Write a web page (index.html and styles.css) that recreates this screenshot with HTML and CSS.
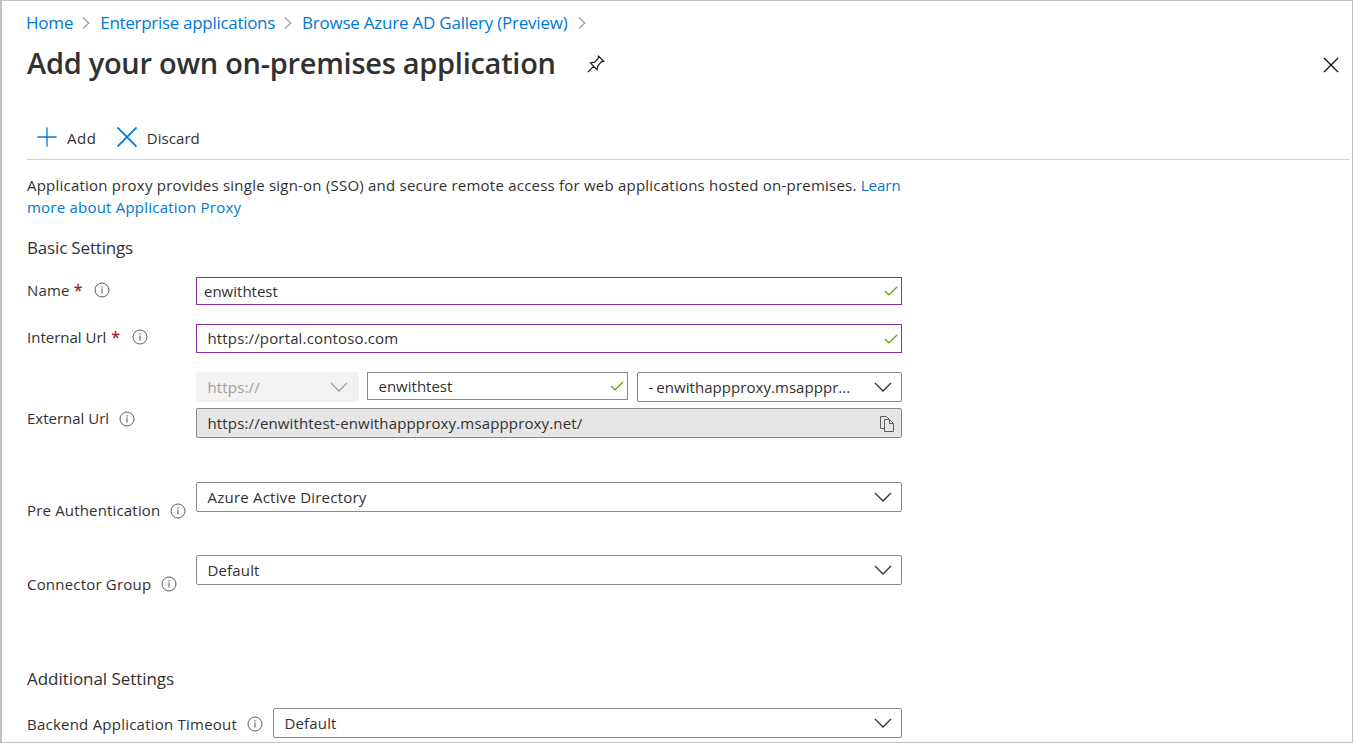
FILE: index.html
```
<!DOCTYPE html>
<html lang="en">
<head>
<meta charset="utf-8">
<title>Add your own on-premises application</title>
<link rel="stylesheet" href="styles.css">
</head>
<body>
<svg class="defs" width="0" height="0">
  <symbol id="info" viewBox="0 0 16 16"><circle cx="8" cy="8" r="7" fill="none" stroke="#605e5c"/><path d="M8 6.6v5" stroke="#605e5c" stroke-width="1.1"/><path d="M8 4.2v1.2" stroke="#605e5c" stroke-width="1.2"/></symbol>
  <symbol id="crumb" viewBox="0 0 8 12"><path d="M.8.5 6.8 6 .8 11.5" fill="none" stroke="#a6a6a6" stroke-width="1.4"/></symbol>
  <symbol id="chev" viewBox="0 0 18 10"><path d="M1 1 9 9l8-8" fill="none" stroke="currentColor" stroke-width="1.3"/></symbol>
  <symbol id="tick" viewBox="0 0 14 10"><path d="M1 5 5 9l8-8" fill="none" stroke="#57a300" stroke-width="1.2"/></symbol>
</svg>
<div class="page">
  <nav class="crumbs">
    <a class="c1">Home</a><svg class="sep"><use href="#crumb"/></svg>
    <a class="c2">Enterprise applications</a><svg class="sep"><use href="#crumb"/></svg>
    <a class="c3">Browse Azure AD Gallery (Preview)</a><svg class="sep"><use href="#crumb"/></svg>
  </nav>
  <header class="head">
    <h1>Add your own on-premises application</h1>
    <svg class="pin" viewBox="0 0 18 18"><path d="M11.6 1.2 16.8 6.2 14.4 6.9 11 10.6 10 14.6 3.4 8 7.6 7.2 11 3.6ZM6.8 11.2 .8 17.2" fill="none" stroke="#1b1a19" stroke-width="1.2"/></svg>
    <svg class="close" viewBox="0 0 16 16"><path d="M1 1l14 14M15 1 1 15" stroke="#111" stroke-width="1.3"/></svg>
  </header>
  <div class="toolbar">
    <svg class="plus" viewBox="0 0 20 20"><path d="M10 .5v19M.5 10h19" stroke="#0078d4" stroke-width="1.3"/></svg><span class="t-add">Add</span>
    <svg class="cross" viewBox="0 0 20 20"><path d="M.5.5l19 19M19.5.5l-19 19" stroke="#0078d4" stroke-width="1.8"/></svg><span class="t-discard">Discard</span>
  </div>
  <p class="intro"><span class="i1">Application proxy provides single sign-on (SSO) and secure remote access for web applications hosted on-premises. <a>Learn</a></span><br><a class="i2">more about Application Proxy</a></p>
  <h2 class="basic">Basic Settings</h2>
  <div class="row name">
    <label><span class="l1">Name</span><b>*</b><svg class="info"><use href="#info"/></svg></label>
    <div class="box valid"><span class="v1">enwithtest</span><svg class="tick"><use href="#tick"/></svg></div>
  </div>
  <div class="row internal">
    <label><span class="l2">Internal Url</span><b>*</b><svg class="info"><use href="#info"/></svg></label>
    <div class="box valid"><span class="v2">https://portal.contoso.com</span><svg class="tick"><use href="#tick"/></svg></div>
  </div>
  <div class="row external">
    <label><span class="l3">External Url</span><svg class="info"><use href="#info"/></svg></label>
    <div class="stack">
      <div class="parts">
        <div class="box select disabled"><span class="v3">https://</span><svg class="chev"><use href="#chev"/></svg></div>
        <div class="box host"><span class="v1">enwithtest</span><svg class="tick"><use href="#tick"/></svg></div>
        <div class="box select domain"><span class="dash">-</span><span class="v5">enwithappproxy.msapppr...</span><svg class="chev"><use href="#chev"/></svg></div>
      </div>
      <div class="box select full"><span class="v3">https://</span><span class="v6">enwithtest-enwithappproxy.msappproxy.net/</span>
        <svg class="copy" viewBox="0 0 14 16"><path d="M4.5 12.5H.5V.5h6l2.5 2.5M4.5 3.5h5l4 4v8h-9zM9.5 3.5v4h4" fill="none" stroke="#605e5c"/></svg></div>
    </div>
  </div>
  <div class="row preauth">
    <label><span class="l4">Pre Authentication</span><svg class="info"><use href="#info"/></svg></label>
    <div class="box select"><span class="v7">Azure Active Directory</span><svg class="chev"><use href="#chev"/></svg></div>
  </div>
  <div class="row connector">
    <label><span class="l5">Connector Group</span><svg class="info"><use href="#info"/></svg></label>
    <div class="box select"><span class="v8">Default</span><svg class="chev"><use href="#chev"/></svg></div>
  </div>
  <h2 class="additional">Additional Settings</h2>
  <div class="row timeout">
    <label><span class="l6">Backend Application Timeout</span><svg class="info"><use href="#info"/></svg></label>
    <div class="box select"><span class="v8">Default</span><svg class="chev"><use href="#chev"/></svg></div>
  </div>
</div>
</body>
</html>
```
FILE: styles.css
```
* { box-sizing: border-box; }
body { margin: 0; background: #fff; color: #323130; font: 15px/22px "Open Sans", "Noto Sans", sans-serif; overflow: hidden; }
.defs { display: block; height: 0; }
svg { flex: none; }
a { color: #0078d4; }
span, a, h1, h2 { white-space: nowrap; }
.page { width: 1353px; height: 743px; border: 1px solid #c0c0c0; border-left-width: 2px; padding-left: 25px; overflow: hidden; }
.crumbs { display: flex; align-items: center; height: 22px; margin-top: 11px; font-size: 17px; }
.c1 { margin-left: -1px; letter-spacing: -0.2px; }
.c2 { letter-spacing: -0.3px; }
.c3 { letter-spacing: -0.23px; }
.sep { width: 8px; height: 12px; margin: 0 10px 0 9px; }
.c3 + .sep { margin-left: 11px; }
.head { display: flex; align-items: center; height: 44px; margin-top: 8px; padding-right: 13.5px; }
h1 { margin: 0; font-size: 29px; font-weight: 600; line-height: 42px; padding-bottom: 2px; letter-spacing: -0.28px; }
.pin { width: 18px; height: 18px; margin-left: 31px; }
.close { width: 16px; height: 16px; margin: 1px 0 0 auto; }
.toolbar { display: flex; align-items: center; height: 44px; margin: 30px 2px 0 0; padding: 0 0 1px 10px; border-bottom: 1px solid #d2d0ce; }
.t-add { padding-top: 1px; letter-spacing: 0.5px; }
.t-discard { padding-top: 1px; letter-spacing: 0.05px; }
.plus { width: 20px; height: 20px; margin-right: 10px; }
.cross { width: 20px; height: 20px; margin: 0 10px 0 20.5px; }
.intro { margin: 14px 0 0; letter-spacing: 0.22px; }
.intro span a { letter-spacing: 0; }
h2 { margin: 0; font-size: 17px; font-weight: 400; line-height: 24px; }
.basic { margin-top: 18px; letter-spacing: -0.17px; }
.row { display: flex; align-items: flex-start; }
label { display: flex; align-items: center; flex: none; width: 169px; height: 22px; }
label b { margin-left: 5px; color: #a4262c; font-size: 16px; font-weight: 600; line-height: 22px; }
.l1 { letter-spacing: 0.2px; }
.l4 { letter-spacing: 0.17px; }
.l5 { letter-spacing: 0.2px; }
.l6 { letter-spacing: 0.23px; }
.info { width: 16px; height: 16px; margin-left: 10px; }
label b + .info { margin-left: 11.5px; }
.name b { margin-left: 4px; }
.box { display: flex; align-items: center; width: 706px; height: 28px; padding: 0 3px 0 7px; border: 1px solid #8a8886; }
.select { height: 30px; padding: 0 9px 0 10.5px; border-radius: 2px; color: #323130; }
.valid { border-color: #8a2da5; }
.tick { width: 14px; height: 10px; margin-left: auto; }
.chev { width: 18px; height: 10px; margin-left: auto; }
.v2, .v3, .v6, .v8 { letter-spacing: 0.15px; }
.v5 { letter-spacing: 0.05px; }
.v7 { letter-spacing: 0.22px; }
.dash { margin-right: 3px; }
.name { margin-top: 17px; }
.name label { margin-top: 2px; }
.internal { margin-top: 19px; }
.internal label { margin-top: 2px; }
.internal .box { height: 29px; padding-left: 10.5px; }
.v2 { padding-bottom: 1px; }
.external { margin-top: 19px; }
.external label { margin-top: 35px; }
.external .info { margin-top: 1px; }
.stack { display: flex; flex-direction: column; gap: 6px; }
.parts { display: flex; width: 706px; }
.disabled { width: 163px; padding-right: 10px; background: #f3f2f1; border-color: #f3f2f1; color: #a19f9d; }
.host { width: 261px; margin: 0 9px 0 8px; padding-left: 10.5px; }
.domain { width: 265px; }
.full { background: #e6e6e6; padding-right: 7px; }
.copy { width: 14px; height: 16px; margin: 2px 0 0 auto; }
.preauth { margin-top: 44px; }
.preauth label { margin-top: 17px; }
.connector label { margin-top: 18px; }
.preauth .info { margin-top: 1px; }
.connector { margin-top: 34px; }
.additional { margin-top: 72px; letter-spacing: -0.05px; }
.timeout { margin-top: 17px; }
.timeout label { width: 246px; margin-top: 5px; }
.timeout .box { width: 629px; }
```
